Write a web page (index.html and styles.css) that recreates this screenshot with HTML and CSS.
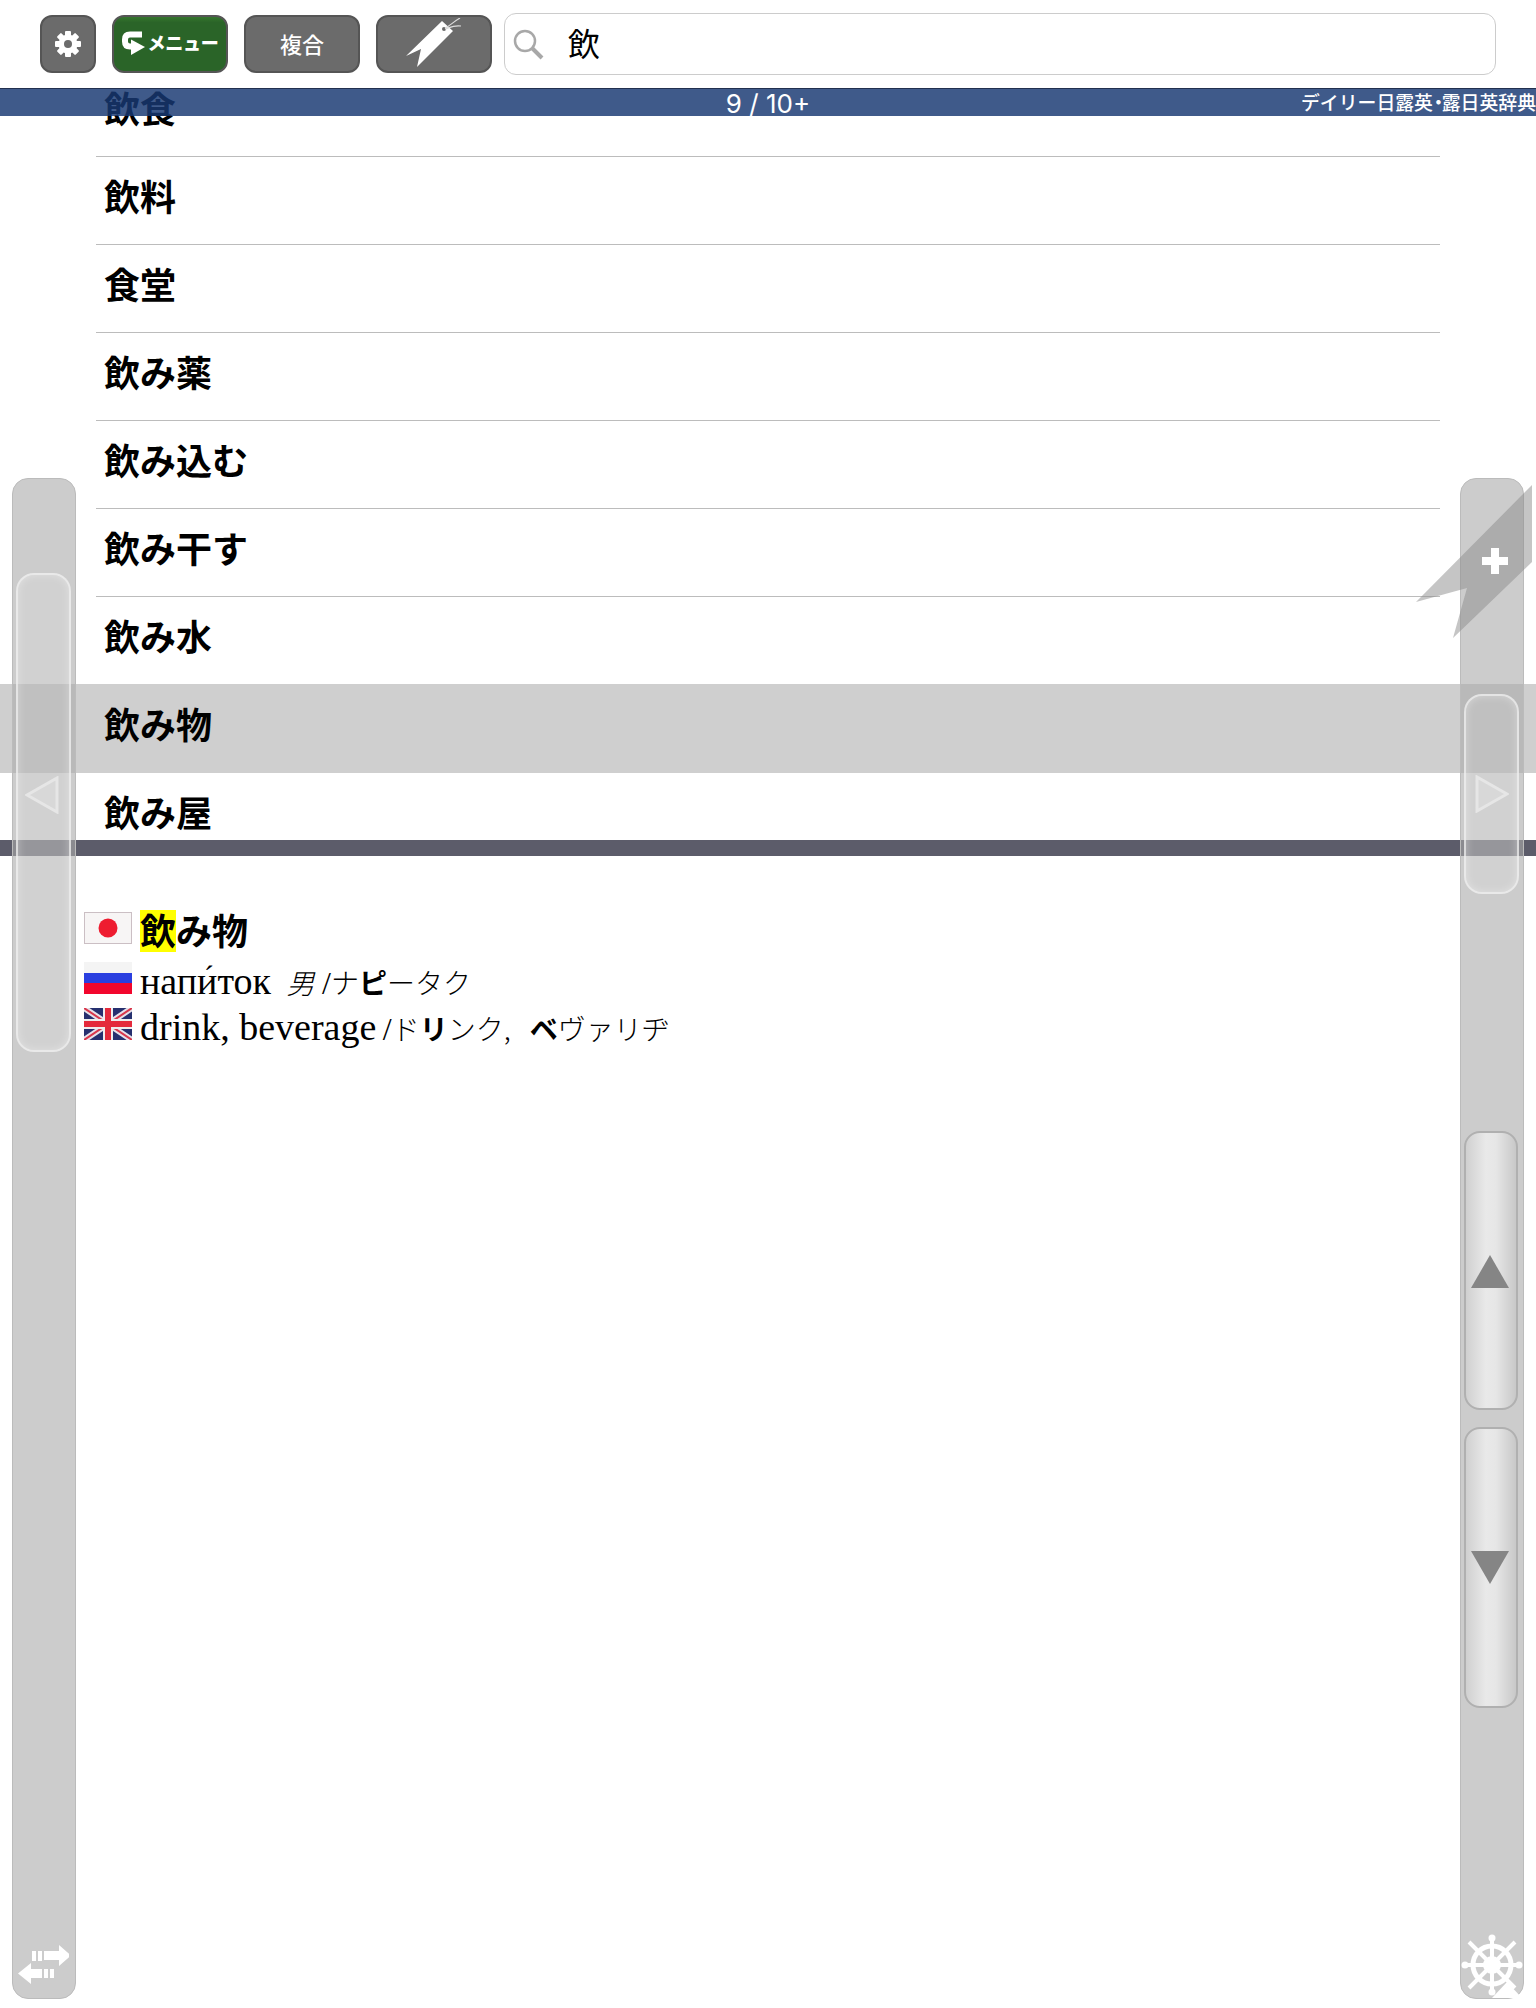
FILE: index.html
```html
<!DOCTYPE html>
<html lang="ja">
<head>
<meta charset="utf-8">
<title>辞書</title>
<link rel="stylesheet" href="styles.css">
</head>
<body>
<div class="app">
  <div class="toolbar">
    <button class="btn btn-gear" aria-label="設定">
      <svg width="28" height="28" viewBox="-14 -14 28 28"><g fill="#fff"><rect x="-3" y="-13" width="6" height="26" rx="1"/><rect x="-3" y="-13" width="6" height="26" rx="1" transform="rotate(45)"/><rect x="-3" y="-13" width="6" height="26" rx="1" transform="rotate(90)"/><rect x="-3" y="-13" width="6" height="26" rx="1" transform="rotate(135)"/><circle r="9.5"/></g><circle r="4" fill="#6b6b6b"/></svg>
    </button>
    <button class="btn btn-menu">
      <svg class="menu-icon" width="24" height="24" viewBox="0 0 24 24"><path d="M20 3.500H8C4.500 3.500 3 5.500 3 8.500v2C3 13.500 4.500 15.500 8 15.500h3" fill="none" stroke="#fff" stroke-width="6"/><path d="M9 8.500l14 7.500L9 24z" fill="#fff"/></svg>
      <span class="menu-label">メニュー</span>
    </button>
    <button class="btn btn-wide btn-text"><span class="btn-caption">複合</span></button>
    <button class="btn btn-wide" aria-label="しおり">
      <svg class="tag-icon" width="60" height="52" viewBox="0 0 60 52"><path d="M36 3l11 10-36 36 4-18-15 7z" fill="#fff"/><circle cx="38" cy="11" r="2" fill="#6b6b6b"/><path d="M39 10C44 8 47 4 54 0M39 11C45 9 48 7 55 8" fill="none" stroke="#ddd" stroke-width="1.200"/></svg>
    </button>
    <div class="search">
      <svg class="search-icon" width="32" height="32" viewBox="0 0 32 32"><circle cx="12" cy="12" r="10" fill="none" stroke="#a8a8a8" stroke-width="2.500"/><path d="M19 19l10 10" stroke="#a8a8a8" stroke-width="4"/></svg>
      <span class="search-text">飲</span>
    </div>
  </div>

  <div class="results">
    <div class="status">
      <span class="status-count">9 / 10+</span>
      <span class="status-dict">デイリー日露英<span class="narrow">・</span>露日英辞典</span>
    </div>
    <ul class="list">
      <li class="row"><span class="row-label">飲食</span></li>
      <li class="row"><span class="row-label">飲料</span></li>
      <li class="row"><span class="row-label">食堂</span></li>
      <li class="row"><span class="row-label">飲み薬</span></li>
      <li class="row"><span class="row-label">飲み込む</span></li>
      <li class="row"><span class="row-label">飲み干す</span></li>
      <li class="row"><span class="row-label">飲み水</span></li>
      <li class="row row-selected"><span class="row-label">飲み物</span></li>
      <li class="row"><span class="row-label">飲み屋</span></li>
    </ul>
  </div>

  <div class="splitter"></div>

  <div class="detail">
    <div class="entry entry-jp">
      <svg class="flag" width="48" height="32" viewBox="0 0 48 32"><rect width="48" height="32" fill="#f7f5f5"/><rect x=".5" y=".5" width="47" height="31" fill="none" stroke="#cbbfc4"/><circle cx="24" cy="16" r="9.500" fill="#ee1c30"/></svg>
      <div class="headword"><mark class="hit">飲</mark>み物</div>
    </div>
    <div class="entry entry-ru">
      <svg class="flag" width="48" height="32" viewBox="0 0 48 32"><rect width="48" height="11" fill="#f4f4f4"/><rect y="11" width="48" height="11" fill="#2a3fe0"/><rect y="21" width="48" height="11" fill="#f2062d"/></svg>
      <div class="trans">нап<span class="stress">и</span>ток <i class="jp gender">男</i> <span class="jp-sep">/</span><span class="jp">ナ<b>ピ</b>ータク</span></div>
    </div>
    <div class="entry entry-en">
      <svg class="flag" width="48" height="32" viewBox="0 0 48 32"><rect width="48" height="32" fill="#26306f"/><path d="M0 0l48 32M48 0L0 32" stroke="#e6e2ea" stroke-width="6"/><path d="M0 0l48 32M48 0L0 32" stroke="#d8374c" stroke-width="2"/><path d="M24 0v32M0 16h48" stroke="#eee" stroke-width="10"/><path d="M24 0v32M0 16h48" stroke="#e42a3c" stroke-width="6"/></svg>
      <div class="trans">drink, beverage <span class="jp-sep jp-sep-tight">/</span><span class="jp">ド<b>リ</b>ンク,&ensp;<b class="after-gap">ベ</b>ヴァリヂ</span></div>
    </div>
  </div>

  <div class="side side-left">
    <div class="thumb thumb-left"></div>
    <svg class="tri tri-left" width="34" height="38" viewBox="0 0 34 38"><path d="M2 19L32 2v34z" fill="#d8d8d8" stroke="#e6e6e6" stroke-width="3"/></svg>
    <svg class="swap" width="54" height="40" viewBox="0 0 54 40"><g fill="#fff"><path d="M17 6h4v10h-4zM23 6h4v10h-4zM29 6h15V0l12 10.500L44 21v-6H29z"/><path d="M39 24h-4v9h4zM33 24h-4v9h4zM27 24H16v-6L3 28.500 16 39v-6h11z"/></g></svg>
  </div>

  <div class="side side-right">
    <div class="thumb thumb-right"></div>
    <svg class="tri tri-right" width="34" height="38" viewBox="0 0 34 38"><path d="M32 19L2 2v34z" fill="#d8d8d8" stroke="#e6e6e6" stroke-width="3"/></svg>
    <div class="page-btn page-up"><svg width="38" height="33" viewBox="0 0 38 33"><path d="M19 0l19 33H0z" fill="#858585"/></svg></div>
    <div class="page-btn page-down"><svg width="38" height="33" viewBox="0 0 38 33"><path d="M19 33L38 0H0z" fill="#858585"/></svg></div>
    <svg class="wheel" width="64" height="64" viewBox="-32 -32 64 64"><g stroke="#fff" stroke-width="4" fill="none"><circle r="19" stroke-width="5"/><path d="M0-27V27M-27 0H27M-23-23L23 23M-23 23L23-23"/></g><g fill="#fff"><circle r="9"/><circle cy="-27" r="3.500"/><circle cy="27" r="3.500"/><circle cx="-27" r="3.500"/><circle cx="27" r="3.500"/></g></svg>
    <svg class="wheel-mark" width="30" height="16" viewBox="0 0 30 16"><path d="M15 0l15 16H0z" fill="#fff"/></svg>
  </div>

  <svg class="ribbon" width="120" height="156" viewBox="0 0 120 156"><path d="M116 3L0 120l51-14-14 50 79-76z" fill="#8c8c8c" fill-opacity=".5"/><path d="M66 75h26v8H66zM75 66h8v26h-8z" fill="#fff"/></svg>
</div>
</body>
</html>
```

FILE: styles.css
```css
* { box-sizing: border-box; }
html, body { margin: 0; padding: 0; background: #fff; }
.app {
  position: relative;
  width: 1536px;
  height: 2008px;
  overflow: hidden;
  font-family: "Liberation Serif", "Noto Sans CJK JP", serif;
  color: #000;
}

/* toolbar */
.toolbar {
  display: flex;
  align-items: flex-start;
  gap: 16px;
  height: 88px;
  padding: 15px 40px 0;
}
.btn {
  display: flex;
  align-items: center;
  justify-content: center;
  width: 56px;
  height: 58px;
  padding: 0;
  border: 2px solid #555;
  border-radius: 12px;
  background: #6b6b6b;
  color: #fff;
  font-family: "Noto Sans CJK JP", sans-serif;
}
.btn-wide { width: 116px; }
.btn-text { font-size: 22px; font-weight: 500; }
.btn-caption { margin-top: -3px; }
.tag-icon { margin-left: 3px; }
.btn-menu {
  width: 116px;
  gap: 2px;
  background: linear-gradient(#35762d, #2a6428 10%);
}
.menu-icon { margin-top: -2px; }
.menu-label {
  margin-top: -5px;
  font-size: 18px;
  font-weight: 900;
  line-height: 1;
  letter-spacing: -.3px;
}
.search {
  display: flex;
  align-items: center;
  width: 992px;
  height: 62px;
  margin: -2px 0 0 -4px;
  padding-left: 8px;
  border: 1.5px solid #ccc;
  border-radius: 12px;
}
.search-icon { margin-top: 2px; }
.search-text {
  margin: -4px 0 0 23px;
  font-family: "Noto Sans CJK JP", sans-serif;
  font-size: 32px;
  line-height: 1;
}

/* results */
.results {
  position: relative;
  height: 752px;
  overflow: hidden;
}
.status {
  position: absolute;
  top: 0;
  left: 0;
  z-index: 1;
  width: 100%;
  height: 28px;
  border-top: 1px solid #22304f;
  background: rgba(24, 57, 114, .83);
  color: #fff;
  font-family: "Noto Sans CJK JP", sans-serif;
}
.status-count {
  position: absolute;
  left: 0;
  width: 100%;
  text-align: center;
  font-family: Inter, "Liberation Sans", sans-serif;
  font-size: 26px;
  line-height: 29px;
}
.status-dict {
  position: absolute;
  right: 0;
  font-size: 18.85px;
  font-weight: 500;
  line-height: 26px;
  white-space: nowrap;
}
.narrow { letter-spacing: -8px; margin: 0 2px 0 -4px; }
.list {
  margin: -19px 0 0;
  padding: 0;
  list-style: none;
  font-family: "Noto Sans CJK JP", sans-serif;
  font-size: 36px;
  font-weight: 700;
}
.row { height: 88px; padding: 0 96px; }
.row-label {
  display: block;
  height: 88px;
  padding-left: 8px;
  border-bottom: 1px solid #bcbcbc;
  line-height: 77px;
}
.row-selected { background: #cfcfcf; box-shadow: 0 -1px 0 #cfcfcf; }
.row-selected .row-label { border-bottom-color: transparent; }

.splitter { height: 16px; background: #5c5c6a; }

/* detail */
.detail { padding: 54px 0 0 84px; }
.entry { display: flex; align-items: flex-start; gap: 8px; }
.flag { flex: none; }
.entry-jp { height: 52px; }
.entry-ru { height: 46px; }
.entry-jp .flag { margin-top: 2px; }
.headword {
  font-family: "Noto Sans CJK JP", sans-serif;
  font-size: 36px;
  font-weight: 700;
  line-height: 38px;
}
.hit {
  display: inline-block;
  height: 42px;
  background: #ff0;
  color: inherit;
}
.trans {
  font-size: 38px;
  line-height: 38px;
  white-space: pre-wrap;
}
.stress { position: relative; }
.stress::after {
  content: "´";
  position: absolute;
  left: 7px;
  top: -3px;
  font-size: 30px;
}
.jp {
  font-family: "Noto Sans CJK JP", sans-serif;
  font-size: 28px;
  font-weight: 300;
}
.jp b { font-weight: 700; }
.jp-sep { font-size: 32px; }
.jp-sep-tight { margin-left: -3px; }
.after-gap { margin-left: 5px; }
.gender { font-style: italic; margin-left: 6px; margin-right: -2px; }

/* side panels */
.side {
  position: absolute;
  top: 478px;
  width: 64px;
  height: 1521px;
  border: 1px solid #bbb;
  border-radius: 16px;
  background: rgba(170, 170, 170, .6);
}
.side-left { left: 12px; }
.side-right { left: 1460px; }
.thumb {
  position: absolute;
  width: 55px;
  border: 2px solid rgba(240, 240, 240, .75);
  border-radius: 18px;
  background: rgba(255, 255, 255, .1);
  box-shadow: inset 0 0 8px rgba(255, 255, 255, .35);
}
.thumb-left { top: 94px; left: 3px; height: 479px; }
.thumb-right { top: 215px; left: 3px; height: 200px; }
.tri { position: absolute; }
.tri-left { top: 297px; left: 12px; }
.tri-right { top: 296px; left: 14px; }
.swap { position: absolute; left: 2px; top: 1466px; }
.page-btn {
  position: absolute;
  left: 3px;
  display: flex;
  justify-content: center;
  width: 54px;
  border: 2px solid #b0b0b0;
  border-radius: 16px;
  background: linear-gradient(90deg, #d0d0d0, #e9e9e9 40%, #e6e6e6 60%, #c8c8c8);
}
.page-btn svg { margin-left: -2px; }
.page-up { top: 652px; height: 279px; align-items: flex-start; }
.page-up svg { margin-top: 122px; }
.page-down { top: 948px; height: 281px; align-items: flex-start; }
.page-down svg { margin-top: 122px; }
.wheel { position: absolute; left: -1px; top: 1454px; }
.wheel-mark { position: absolute; left: 31px; top: 1503px; }

.ribbon { position: absolute; left: 1416px; top: 482px; }
```
